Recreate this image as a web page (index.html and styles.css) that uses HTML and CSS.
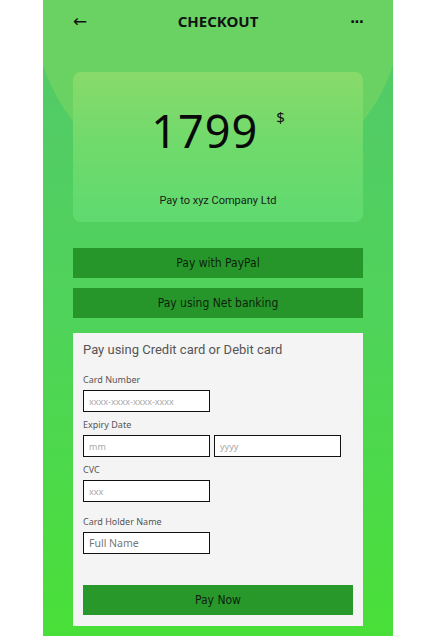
FILE: index.html
```html
<!DOCTYPE html>
<html>
<head>
<meta charset="utf-8">
<link rel="stylesheet" href="styles.css">
</head>
<body>
<div class="panel">
  <div class="blob"></div>
  <header class="topbar">
    <span class="back">&#8592;</span>
    <h1 class="title">CHECKOUT</h1>
    <span class="more">&middot;&middot;&middot;</span>
  </header>
  <section class="amount-card">
    <div class="amount"><span class="num">1799</span><span class="cur">$</span></div>
    <div class="payee">Pay to xyz Company Ltd</div>
  </section>
  <button class="btn opt">Pay with PayPal</button>
  <button class="btn opt">Pay using Net banking</button>
  <section class="form-card">
    <h2 class="form-title">Pay using Credit card or Debit card</h2>
    <label class="lbl">Card Number</label>
    <input class="field" placeholder="xxxx-xxxx-xxxx-xxxx">
    <label class="lbl">Expiry Date</label>
    <div class="row">
      <input class="field" placeholder="mm">
      <input class="field" placeholder="yyyy">
    </div>
    <label class="lbl">CVC</label>
    <input class="field" placeholder="xxx">
    <label class="lbl lbl-gap">Card Holder Name</label>
    <input class="field name" placeholder="Full Name">
    <button class="btn pay">Pay Now</button>
  </section>
</div>
</body>
</html>
```

FILE: styles.css
```css
html, body {
  margin: 0;
  padding: 0;
  background: #ffffff;
}
body {
  font-family: "Noto Sans", "Open Sans", sans-serif;
}
.panel {
  position: relative;
  overflow: hidden;
  width: 350px;
  height: 636px;
  margin-left: 43px;
  box-sizing: border-box;
  padding: 0 30px;
  background: linear-gradient(180deg, #54c86b 0%, #4fd35a 50%, #49df38 100%);
  display: flex;
  flex-direction: column;
}
.blob {
  position: absolute;
  left: -9px;
  top: -176px;
  width: 368px;
  height: 368px;
  border-radius: 50%;
  background: #69d262;
}
.topbar, .amount-card, .btn, .form-card {
  position: relative;
}
.topbar {
  height: 42px;
  display: flex;
  align-items: center;
  justify-content: space-between;
  color: #111;
}
.back {
  font-family: "DejaVu Sans", sans-serif;
  font-size: 17px;
  width: 20px;
  line-height: 1;
  margin-top: 1px;
}
.title {
  margin: 0;
  font-family: "Noto Sans", sans-serif;
  font-size: 15px;
  font-weight: 700;
  color: #111;
}
.more {
  font-family: "DejaVu Sans", sans-serif;
  font-size: 14px;
  font-weight: 700;
  width: 20px;
  text-align: right;
  letter-spacing: -1px;
  margin-top: 2px;
}
.amount-card {
  margin-top: 30px;
  height: 150px;
  border-radius: 8px;
  background: linear-gradient(180deg, #88da6a 0%, #6fda6c 50%, #5fda6f 100%);
  display: flex;
  flex-direction: column;
  align-items: center;
}
.amount {
  margin-top: 33px;
  display: flex;
  align-items: flex-start;
}
.num {
  font-family: "Noto Sans", sans-serif;
  font-size: 45px;
  line-height: 52px;
  color: #0a0a0a;
  letter-spacing: 1px;
}
.cur {
  font-size: 15px;
  line-height: 20px;
  margin-left: 18px;
  margin-top: 2px;
  color: #111;
}
.payee {
  margin-top: 37px;
  font-family: "Roboto", sans-serif;
  font-size: 11px;
  color: #1a1a1a;
}
.btn {
  border: none;
  display: block;
  width: 100%;
  height: 30px;
  padding: 0;
  background: #27962a;
  color: #0d1f0d;
  font-family: "DejaVu Sans", sans-serif;
  font-stretch: condensed;
  font-size: 12px;
  text-align: center;
}
.opt {
  margin-top: 10px;
}
.opt:first-of-type {
  margin-top: 26px;
}
.form-card {
  margin-top: 15px;
  height: 293px;
  box-sizing: border-box;
  background: #f4f4f4;
  padding: 8px 10px 0 10px;
  display: flex;
  flex-direction: column;
  align-items: flex-start;
}
.form-title {
  margin: 0;
  font-family: "Roboto", sans-serif;
  font-size: 13px;
  font-weight: 400;
  color: #555;
  line-height: 18px;
}
.lbl {
  margin-top: 15px;
  font-size: 9px;
  line-height: 12px;
  color: #555;
}
.field + .lbl, .row + .lbl {
  margin-top: 7px;
}
.field + .lbl-gap {
  margin-top: 14px;
}
.field {
  margin-top: 4px;
  width: 127px;
  height: 22px;
  box-sizing: border-box;
  border: 1.5px solid #111;
  background: #fff;
  padding: 0 5px;
  font-family: "Noto Sans", sans-serif;
  font-size: 9px;
  outline: none;
}
.field::placeholder {
  color: #a8a8a8;
}
.name {
  font-size: 10.5px;
}
.name::placeholder {
  color: #777;
}
.row {
  display: flex;
  gap: 4px;
}
.pay {
  margin-top: 31px;
  width: 270px;
  background: #28982b;
}
```
